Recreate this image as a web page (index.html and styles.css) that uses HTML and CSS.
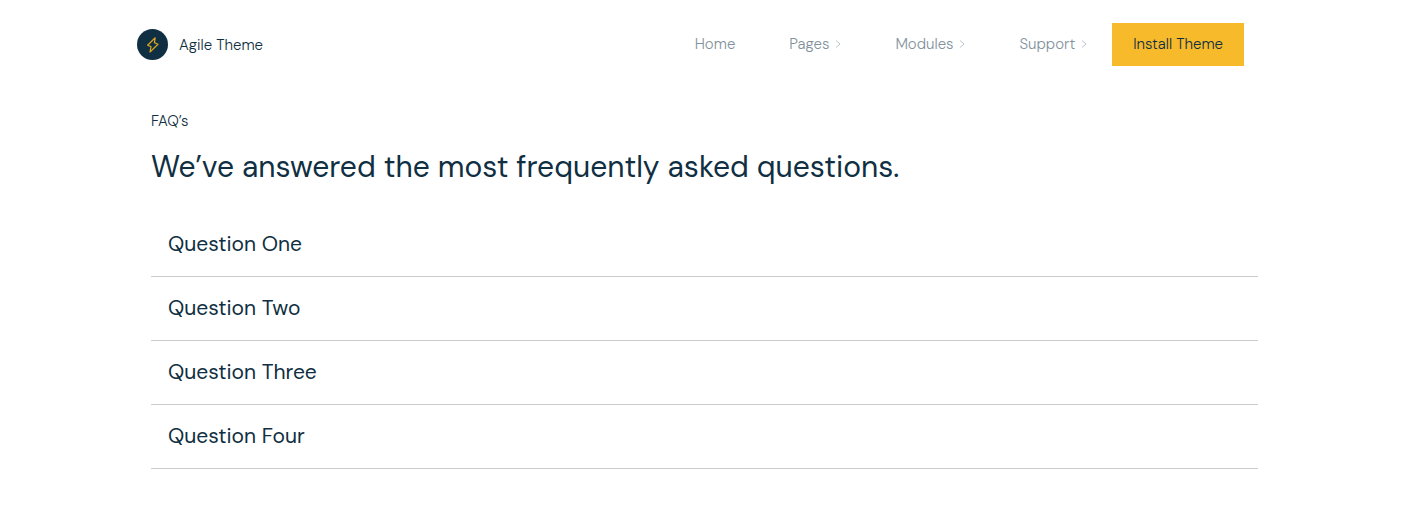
FILE: index.html
```html
<!DOCTYPE html>
<html lang="en">
<head>
    <meta charset="UTF-8">
    <meta name="viewport" content="width=device-width, initial-scale=1.0">
    <title>Agile Theme - FAQ's</title>
    <link rel="stylesheet" href="styles.css">
</head>
<body>
    <header class="header">
        <a class="brand" href="#">
            <svg class="brand-logo" viewBox="0 0 31 31" aria-hidden="true">
                <circle cx="15.5" cy="15.5" r="15.5" fill="#102f42"/>
                <path d="M18.2 8.8 L10.6 16.2 L14 17.6 L13 23 L21 15.2 L17.4 13.6 Z" fill="none" stroke="#d9a520" stroke-width="1.2" stroke-linejoin="round"/>
            </svg>
            <span>Agile Theme</span>
        </a>
        <nav class="nav">
            <a class="nav-link" href="#">Home</a>
            <a class="nav-link" href="#">Pages
                <svg class="chevron" viewBox="0 0 6 8" aria-hidden="true"><path d="M1 0.5 L5 4 L1 7.5"/></svg>
            </a>
            <a class="nav-link" href="#">Modules
                <svg class="chevron" viewBox="0 0 6 8" aria-hidden="true"><path d="M1 0.5 L5 4 L1 7.5"/></svg>
            </a>
            <a class="nav-link" href="#">Support
                <svg class="chevron" viewBox="0 0 6 8" aria-hidden="true"><path d="M1 0.5 L5 4 L1 7.5"/></svg>
            </a>
        </nav>
        <a class="install" href="#">Install Theme</a>
    </header>

    <main class="faq">
        <p class="faq-label">FAQ’s</p>
        <h1>We’ve answered the most frequently asked questions.</h1>
        <div class="faq-list">
            <button type="button" class="question">Question One</button>
            <button type="button" class="question">Question Two</button>
            <button type="button" class="question">Question Three</button>
            <button type="button" class="question">Question Four</button>
        </div>
    </main>
</body>
</html>
```

FILE: styles.css
```css
* {
    box-sizing: border-box;
}
body {
    margin: 0;
    background: #fff;
    color: #102f42;
    font-family: "DM Sans", Inter, "Liberation Sans", sans-serif;
    font-size: 15px;
    font-weight: 300;
    line-height: 20px;
}
a {
    color: inherit;
    text-decoration: none;
}
.header {
    display: flex;
    align-items: center;
    padding: 23px 159px 0 137px;
}
.brand {
    display: flex;
    align-items: center;
    gap: 11px;
    margin-right: auto;
}
.brand-logo {
    width: 31px;
    height: 31px;
}
.nav {
    display: flex;
    gap: 54px;
    margin-right: 25px;
    padding-bottom: 1px;
}
.nav-link {
    display: flex;
    align-items: center;
    gap: 6px;
    color: #82929d;
}
.chevron {
    width: 6px;
    height: 8px;
    fill: none;
    stroke: #bcc5cb;
}
.install {
    padding: 11px 21px 12px;
    background: #f7ba2a;
}
.faq {
    padding: 45px 145px 58px 151px;
}
.faq-label {
    margin: 0;
}
h1 {
    margin: 16px 0 26px;
    font-size: 30px;
    line-height: 40px;
    font-weight: 400;
}
.question {
    display: block;
    width: 100%;
    padding: 16px 17px 17px;
    border: none;
    border-bottom: 1px solid #ccc;
    background: none;
    color: inherit;
    font: inherit;
    font-size: 21px;
    font-weight: 400;
    line-height: 30px;
    text-align: left;
    cursor: pointer;
}
```
